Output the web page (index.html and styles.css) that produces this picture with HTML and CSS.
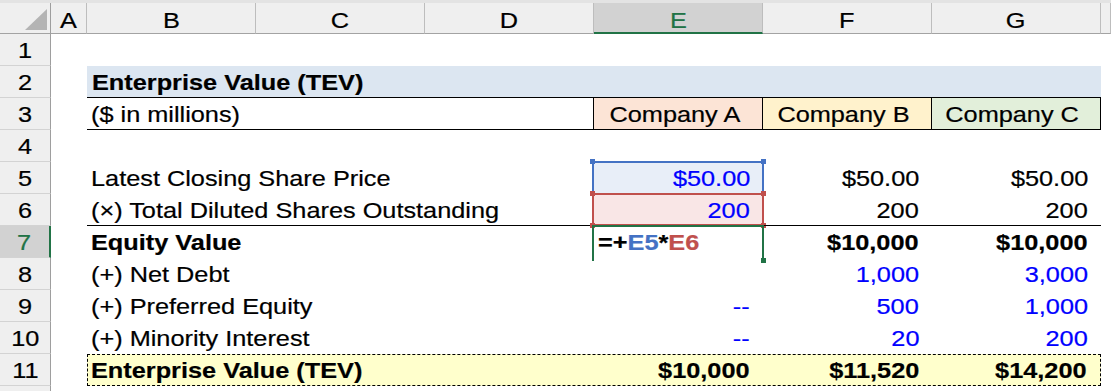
FILE: index.html
```html
<!DOCTYPE html>
<html>
<head>
<meta charset="utf-8">
<link rel="stylesheet" href="styles.css">
</head>
<body>
<div class="sheet">
  <div class="strip"></div>

  <div class="corner"><svg width="50" height="30" viewBox="0 0 50 30"><polygon points="47,6 47,27 25,27" fill="#b4b4b4"/></svg></div>
  <div class="ch"><span class="t">A</span></div>
  <div class="ch"><span class="t">B</span></div>
  <div class="ch"><span class="t">C</span></div>
  <div class="ch"><span class="t">D</span></div>
  <div class="ch ch-sel"><span class="t">E</span></div>
  <div class="ch"><span class="t">F</span></div>
  <div class="ch"><span class="t">G</span></div>
  <div class="ch"></div>

  <!-- row 1 -->
  <div class="rh"><span class="t">1</span></div>
  <div class="c"></div><div class="c"></div><div class="c"></div><div class="c"></div><div class="c"></div><div class="c"></div><div class="c"></div><div class="c"></div>

  <!-- row 2 -->
  <div class="rh"><span class="t">2</span></div>
  <div class="c"></div>
  <div class="title"><span class="t">Enterprise Value (TEV)</span></div>
  <div class="c"></div>

  <!-- row 3 -->
  <div class="rh"><span class="t">3</span></div>
  <div class="c"></div>
  <div class="c bb"><span class="t">($ in millions)</span></div>
  <div class="c bb"></div>
  <div class="c bb br"></div>
  <div class="c bb br ctr co-a"><span class="t">Company A</span></div>
  <div class="c bb br ctr co-b"><span class="t">Company B</span></div>
  <div class="c bb br ctr co-c"><span class="t">Company C</span></div>
  <div class="c"></div>

  <!-- row 4 -->
  <div class="rh"><span class="t">4</span></div>
  <div class="c"></div><div class="c"></div><div class="c"></div><div class="c"></div><div class="c"></div><div class="c"></div><div class="c"></div><div class="c"></div>

  <!-- row 5 -->
  <div class="rh"><span class="t">5</span></div>
  <div class="c"></div>
  <div class="c"><span class="t">Latest Closing Share Price</span></div>
  <div class="c"></div>
  <div class="c"></div>
  <div class="c r inp ref-blue"><span class="t">$50.00</span><span class="frame f-blue"><i class="h tl"></i><i class="h tr"></i></span></div>
  <div class="c r"><span class="t">$50.00</span></div>
  <div class="c r"><span class="t">$50.00</span></div>
  <div class="c"></div>

  <!-- row 6 -->
  <div class="rh"><span class="t">6</span></div>
  <div class="c"></div>
  <div class="c bb"><span class="t">(×) Total Diluted Shares Outstanding</span></div>
  <div class="c bb"></div>
  <div class="c bb"></div>
  <div class="c bb r inp ref-red"><span class="t">200</span><span class="frame f-red"><i class="h tl"></i><i class="h tr"></i><i class="h bl"></i><i class="h brr"></i></span></div>
  <div class="c bb r"><span class="t">200</span></div>
  <div class="c bb r"><span class="t">200</span></div>
  <div class="c"></div>

  <!-- row 7 -->
  <div class="rh rh-sel"><span class="t">7</span></div>
  <div class="c"></div>
  <div class="c b"><span class="t">Equity Value</span></div>
  <div class="c"></div>
  <div class="c"></div>
  <div class="c b edit"><span class="t">=+<span class="k-blue">E5</span>*<span class="k-red">E6</span></span><span class="frame f-green"><i class="h brr"></i></span></div>
  <div class="c r b"><span class="t">$10,000</span></div>
  <div class="c r b"><span class="t">$10,000</span></div>
  <div class="c"></div>

  <!-- row 8 -->
  <div class="rh"><span class="t">8</span></div>
  <div class="c"></div>
  <div class="c"><span class="t">(+) Net Debt</span></div>
  <div class="c"></div>
  <div class="c"></div>
  <div class="c"></div>
  <div class="c r inp"><span class="t">1,000</span></div>
  <div class="c r inp"><span class="t">3,000</span></div>
  <div class="c"></div>

  <!-- row 9 -->
  <div class="rh"><span class="t">9</span></div>
  <div class="c"></div>
  <div class="c"><span class="t">(+) Preferred Equity</span></div>
  <div class="c"></div>
  <div class="c"></div>
  <div class="c r inp"><span class="t">--</span></div>
  <div class="c r inp"><span class="t">500</span></div>
  <div class="c r inp"><span class="t">1,000</span></div>
  <div class="c"></div>

  <!-- row 10 -->
  <div class="rh"><span class="t">10</span></div>
  <div class="c"></div>
  <div class="c"><span class="t">(+) Minority Interest</span></div>
  <div class="c"></div>
  <div class="c"></div>
  <div class="c r inp"><span class="t">--</span></div>
  <div class="c r inp"><span class="t">20</span></div>
  <div class="c r inp"><span class="t">200</span></div>
  <div class="c"></div>

  <!-- row 11 -->
  <div class="rh"><span class="t">11</span></div>
  <div class="c"></div>
  <div class="total">
    <div class="tc"><span class="t">Enterprise Value (TEV)</span></div>
    <div class="tc"></div>
    <div class="tc"></div>
    <div class="tc r"><span class="t">$10,000</span></div>
    <div class="tc r"><span class="t">$11,520</span></div>
    <div class="tc r"><span class="t">$14,200</span></div>
  </div>
  <div class="c"></div>

  <!-- row 12 (partial) -->
  <div class="rh rh-last"></div>
  <div class="c"></div><div class="c"></div><div class="c"></div><div class="c"></div><div class="c"></div><div class="c"></div><div class="c"></div><div class="c"></div>
</div>
</body>
</html>
```

FILE: styles.css
```css
* { box-sizing: border-box; }

html, body {
  margin: 0;
  padding: 0;
  background: #ffffff;
}

body {
  font-family: "Liberation Sans", Arial, sans-serif;
  font-size: 22px;
  color: #000000;
}

.sheet {
  display: grid;
  grid-template-columns: 51px 36px repeat(6, 169px) 10px;
  grid-template-rows: 3px 31px repeat(11, 32px) 5px;
  width: 1111px;
  height: 391px;
  overflow: hidden;
}

/* horizontally stretched text, as in the reference */
.t {
  display: inline-block;
  white-space: nowrap;
  transform: scaleX(1.15);
  transform-origin: left center;
  -webkit-text-stroke: 0.2px currentColor;
}

.strip {
  grid-column: 1 / -1;
  background: #e3e3e3;
}

.corner {
  background: #efefef;
  border-right: 1px solid #9e9e9e;
  border-bottom: 1px solid #a3a3a3;
}
.corner svg { display: block; }

.ch {
  background: #efefef;
  border-right: 1px solid #bdbdbd;
  border-bottom: 1px solid #a3a3a3;
  display: flex;
  align-items: flex-end;
  justify-content: center;
  line-height: 22px;
  padding-bottom: 1px;
}
.ch .t { transform-origin: center center; }

.ch-sel {
  background: #d2d2d2;
  color: #217346;
  border-bottom: 2px solid #217346;
  padding-bottom: 0;
}

.rh {
  background: #efefef;
  border-right: 1px solid #9e9e9e;
  border-bottom: 1px solid #d3d3d3;
  text-align: center;
  padding-top: 3px;
  line-height: 27px;
}
.rh .t { transform-origin: center center; }

.rh-sel {
  background: #d2d2d2;
  color: #217346;
  border-right: 2px solid #217346;
}

.rh-last { border-bottom: none; }

.c {
  position: relative;
  white-space: nowrap;
  padding: 2px 4px 0 4px;
  line-height: 29px;
}

.r {
  text-align: right;
  padding-right: 13px;
}
.r .t { transform-origin: right center; }

.ctr {
  text-align: center;
  padding-left: 0;
  padding-right: 7px;
}
.ctr .t { transform-origin: center center; }

.b { font-weight: bold; }
.bb { border-bottom: 1px solid #000000; }
.br { border-right: 1px solid #000000; }
.inp { color: #0000ff; }

.title {
  grid-column: span 6;
  background: #dce6f1;
  border-bottom: 1px solid #000000;
  font-weight: bold;
  padding: 2px 4px 0 5px;
  line-height: 29px;
  white-space: nowrap;
}

.co-a { background: #fce4d6; }
.co-b { background: #fff2cc; }
.co-c { background: #e2efda; }

.ref-blue { background: #e8eef8; }
.ref-red { background: #f9e6e6; }

.k-blue { color: #4472c4; }
.k-red { color: #c0504d; }

/* reference frames drawn over the cells */
.frame {
  position: absolute;
  left: -2px;
  right: -1px;
  top: -1px;
  bottom: -1px;
  border: 2px solid;
  pointer-events: none;
}
.f-blue { border-color: #4472c4; color: #4472c4; }
.f-red { border-color: #c0504d; color: #c0504d; }
.f-green {
  border-color: #217346;
  color: #217346;
  border-bottom: none;
  bottom: -3px;
}

.h {
  position: absolute;
  width: 5px;
  height: 5px;
  background: currentColor;
}
.h.tl { left: -4px; top: -4px; }
.h.tr { right: -4px; top: -4px; }
.h.bl { left: -4px; bottom: -4px; }
.h.brr { right: -4px; bottom: -4px; }
.f-green .h.brr { bottom: -2px; }

.total {
  grid-column: span 6;
  background: #ffffcc;
  border: 1px dashed #000000;
  display: grid;
  grid-template-columns: 168px 169px 169px 169px 169px 168px;
  font-weight: bold;
}

.tc {
  white-space: nowrap;
  padding: 1px 3px 0 3px;
  line-height: 29px;
}
.tc.r { padding-right: 13px; }
```
